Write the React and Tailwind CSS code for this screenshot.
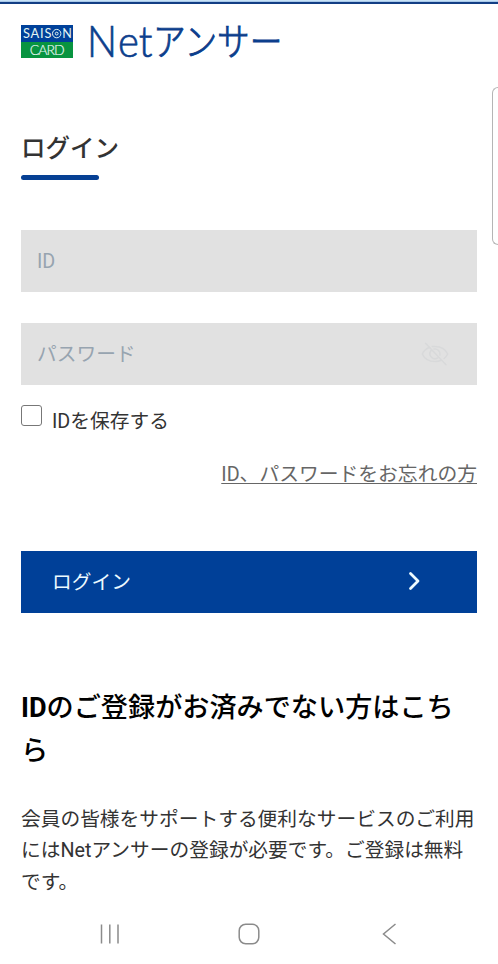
import React from "react";

function Brand() {
  return (
    <header className="flex h-[80px] items-start pl-[21px]">
      <div className="mt-[21px] h-[33px] w-[52px] shrink-0">
        <svg viewBox="0 0 52 33" className="block h-full w-full" fontFamily="Lato, sans-serif" fill="#e4f5f2">
          <rect width="52" height="17" fill="#00419a" />
          <rect y="17" width="52" height="16" fill="#089440" />
          <text x="2" y="13.2" fontSize="12.8" textLength="28.5" lengthAdjust="spacing">SAIS</text>
          <circle cx="35.7" cy="8.6" r="4.2" fill="none" stroke="#e4f5f2" strokeWidth="1" />
          <circle cx="35.7" cy="8.6" r="1.4" fill="none" stroke="#e4f5f2" strokeWidth="1" />
          <text x="41.2" y="13.2" fontSize="12.8" textLength="9.6" lengthAdjust="spacingAndGlyphs">N</text>
          <text x="8.7" y="29.6" fontSize="14" fontWeight="300" stroke="#e4f5f2" strokeWidth="0.2" textLength="35" lengthAdjust="spacing">CARD</text>
        </svg>
      </div>
      <svg viewBox="84 0 204 80" className="ml-[11px] h-[80px] w-[204px] shrink-0" fill="#0c3e8c" stroke="#0c3e8c">
        <g fontFamily="Lato, sans-serif" fontSize="43.5" fontWeight="300" strokeWidth="0.7">
          <text x="87" y="53" textLength="30" lengthAdjust="spacingAndGlyphs">N</text>
          <text x="118" y="53" textLength="34.5" lengthAdjust="spacingAndGlyphs">et</text>
        </g>
        <text x="153" y="51.3" fontFamily="'Noto Sans CJK JP', sans-serif" fontSize="38" fontWeight="300" strokeWidth="0.9" textLength="129.5" lengthAdjust="spacingAndGlyphs">アンサー</text>
      </svg>
    </header>
  );
}

function HiddenEye() {
  return (
    <svg viewBox="0 0 28 24" className="h-6 w-7" fill="none" stroke="#d8d9da" strokeWidth="1.5" strokeLinecap="round">
      <path d="M8.5 5.3C4.5 7 2.4 9.7 1.3 12c2 4.4 6.8 7.6 12.7 7.6 2.1 0 4-.4 5.7-1.1M11.3 4.600c.9-.2 1.8-.2 2.7-.2 5.900 0 10.700 3.200 12.700 7.600-.8 1.700-2 3.200-3.600 4.500" />
      <path d="M9.900 8.800a5 5 0 0 0 7.200 6.800M13 7.100a5 5 0 0 1 5.900 5.900M4.500 1.200l20.500 21.600" />
    </svg>
  );
}

export default function App() {
  return (
    <div className="flex h-[964px] w-[498px] flex-col overflow-hidden bg-white font-[Roboto,'Noto_Sans_CJK_JP',sans-serif] text-[19.73px] text-[#333]">
      <div className="h-[4px] shrink-0 border-t border-b-2 border-t-[#c8e3f8] border-b-[#123e84] bg-[#a9c8e8]" />
      <Brand />
      <div className="flex h-[180px] shrink-0 justify-end">
        <main className="flex-1 pt-[45px] pl-[21px]">
          <h1 className="h-[40px] text-[24.5px] leading-[40px] font-medium whitespace-nowrap">ログイン</h1>
          <div className="mt-[6px] h-[5px] w-[78px] rounded-full bg-[#064094]" />
        </main>
        <aside className="mt-[3px] h-[158px] w-[6px] shrink-0 rounded-l-lg border border-r-0 border-[#b5b5b5] bg-white" />
      </div>

      <form className="-mt-[34px] flex shrink-0 flex-col px-[21px]">
        <div className="flex h-[62px] items-center bg-[#e1e1e1] px-4 pt-[2px] text-[#97a4b0]">ID</div>
        <div className="mt-[31px] flex h-[62px] items-center justify-between bg-[#e1e1e1] pr-7 pl-4 text-[#97a4b0]">
          <span className="pt-[2px]">パスワード</span>
          <HiddenEye />
        </div>
        <label className="mt-[20px] flex h-[32px]">
          <span className="h-[21px] w-[21px] rounded-[3px] border border-[#777]" />
          <span className="ml-[10px] pt-px leading-8">IDを保存する</span>
        </label>
        <a className="mt-[22px] h-[32px] self-end text-[19.8px] leading-8 whitespace-nowrap text-[#666] underline decoration-1 underline-offset-2">ID、パスワードをお忘れの方</a>
        <button type="button" className="mt-[60px] flex h-[62px] items-center justify-between bg-[#004098] pr-[57px] pl-[31px] text-[#ecfaff]">
          <span className="pt-[2px]">ログイン</span>
          <svg viewBox="0 0 12 20" className="mb-[2px] h-5 w-3" fill="none" stroke="currentColor" strokeWidth="2.8" strokeLinecap="round" strokeLinejoin="round">
            <path d="M2.500 2.500L10 10 2.500 17.500" />
          </svg>
        </button>
      </form>

      <section className="mt-[74px] shrink-0 pl-[21px]">
        <h2 className="text-[27.15px] leading-[43px] font-medium text-black">
          <span className="block whitespace-nowrap"><span className="font-bold">ID</span>のご登録がお済みでない方はこち</span>
          <span className="block">ら</span>
        </h2>
        <p className="mt-[31px] leading-[31.300px] whitespace-nowrap">
          会員の皆様をサポートする便利なサービスのご利用<br />
          にはNetアンサーの登録が必要です。ご登録は無料<br />
          です。
        </p>
      </section>

      <nav className="mt-[24px] flex h-[24px] shrink-0 items-center justify-between pr-[101px] pl-[98px]">
        <svg viewBox="0 0 21 22" className="h-[22px] w-[21px]" stroke="#8b8b8b" strokeWidth="1.500">
          <path d="M3.500 1.500v19M11.800 1.500v19M20 1.500v19" />
        </svg>
        <svg viewBox="0 0 22 22" className="mr-[3px] h-[22px] w-[22px]" fill="none" stroke="#8b8b8b" strokeWidth="1.500">
          <rect x="1.200" y="1.200" width="19.600" height="19.600" rx="6.500" />
        </svg>
        <svg viewBox="0 0 16 22" className="h-[22px] w-4" fill="none" stroke="#8b8b8b" strokeWidth="1.500">
          <path d="M14.500 1L2.500 11l12 10" />
        </svg>
      </nav>
    </div>
  );
}
